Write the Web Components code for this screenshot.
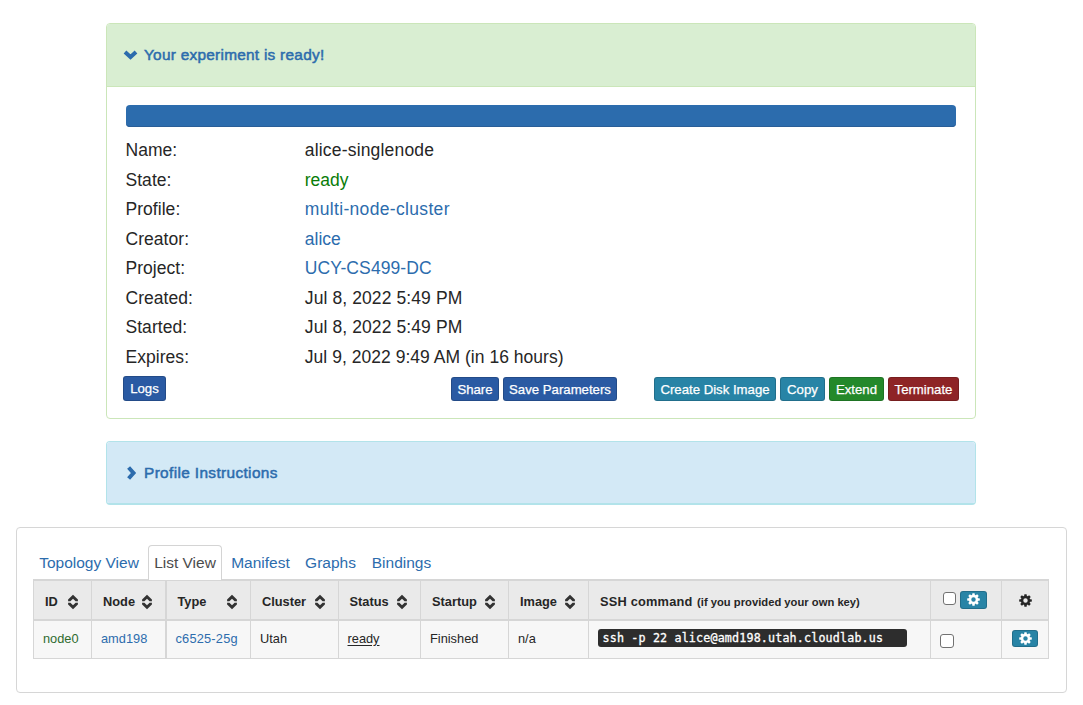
<!DOCTYPE html>
<html lang="en">
<head>
<meta charset="utf-8">
<title>Experiment status</title>
<style>
html,body{margin:0;padding:0;background:#fff}
body{font-family:"Liberation Sans",Arial,Helvetica,sans-serif;color:#262626}
</style>
</head>
<body>
<status-page></status-page>
<script>
const define = (name, html, setup) => {
  const tpl = document.createElement('template');
  tpl.innerHTML = html;
  customElements.define(name, class extends HTMLElement {
    constructor(){ super(); this.attachShadow({mode:'open'}).append(tpl.content.cloneNode(true)); }
    connectedCallback(){ if(setup) setup(this, this.shadowRoot); }
  });
};

/* ---- icons ---- */
const teeth = [0,45,90,135,180,225,270,315].map(a=>`<rect x="5.6" y="0.2" width="2.8" height="3.4" rx=".5" transform="rotate(${a} 7 7)"/>`).join('');
define('gear-icon', `<style>:host{display:block;width:13px;height:13px}svg{display:block}</style>
<svg width="13" height="13" viewBox="0 0 14 14" fill="currentColor">${teeth}<circle cx="7" cy="7" r="3.75" fill="none" stroke="currentColor" stroke-width="2.7"/></svg>`);
define('sort-icon', `<style>:host{display:block;width:12px;height:16px}svg{display:block}</style>
<svg width="12" height="16" viewBox="0 0 12 16" fill="#333"><path d="M6 .8 10.9 5.5V7.2H8.6L6 4.7 3.4 7.2H1.1V5.5Z"/><path d="M6 15.2 10.9 10.5V8.8H8.6L6 11.3 3.4 8.8H1.1V10.5Z"/></svg>`);
define('chevron-icon', `<style>:host{display:flex;width:15px;height:16px;align-items:center;justify-content:center}:host([dir=right]) svg{transform:rotate(-90deg)}svg{display:block}</style>
<svg width="15" height="10" viewBox="0 0 15 10" fill="none" stroke="currentColor" stroke-width="4"><path d="M2 2.1 7.5 7 13 2.1"/></svg>`);

/* ---- controls ---- */
define('action-button', `<style>
:host{display:flex;box-sizing:border-box;height:24px;padding-top:1px;align-items:center;justify-content:center;border-radius:3px;border:1px solid rgba(0,0,0,.16);background-color:var(--c,#2a5aa3);background-clip:border-box;color:#fff;font-size:13.2px;white-space:nowrap;-webkit-text-stroke:.25px #fff}
:host([kind=info]){background-color:#2884a6}:host([kind=ok]){background-color:#24892a}:host([kind=danger]){background-color:#8e2426}
:host([small]){width:27px;height:18px;padding-top:0}
</style><slot></slot>`);
define('check-box', `<style>:host{display:block}input{display:block;appearance:none;box-sizing:border-box;margin:0;width:13px;height:13px;border:1px solid #727272;border-radius:3px;background:#fff}:host([large]) input{width:14px;height:14px}</style><input type="checkbox" aria-label="Select">`);

/* ---- panels ---- */
define('fold-panel', `<style>
:host{display:block;box-sizing:border-box;width:870px;border:1px solid #cbe6b9;border-radius:4px;background:#fff;overflow:hidden}
header{box-sizing:border-box;height:63px;display:flex;align-items:center;padding-left:16px;gap:6px;color:#2c6cad;background:#d9eed2;border-bottom:1px solid #cbe6b9;font-size:15.4px;-webkit-text-stroke:.5px #2c6cad}
.t{letter-spacing:.26px}
:host([kind=info]){border-color:#b2e3ea;border-bottom-width:2px}
:host([kind=info]) header{height:61px;background:#d3e9f6;border:0;padding-left:17px;gap:5px}
:host([kind=info]) .t{letter-spacing:.36px}
</style><header><chevron-icon></chevron-icon><span class="t"><slot name="title"></slot></span></header><slot></slot>`,
(h,r)=>{ if(h.getAttribute('kind')==='info') r.querySelector('chevron-icon').setAttribute('dir','right'); });

define('info-row', `<style>:host{display:grid;grid-template-columns:179.3px 1fr;height:29.5px;align-items:center;font-size:17.5px;white-space:nowrap}
.k{letter-spacing:.04px}
.v{color:var(--v,inherit);letter-spacing:var(--ls,.1px)}</style><span class="k"><slot name="k"></slot></span><span class="v"><slot></slot></span>`);

define('experiment-details', `<style>
:host{display:block;padding:18px 18.5px 0;height:313px}
.bar{height:22px;margin:0 .5px;border-radius:4px;background:#2c6cad;box-shadow:inset 0 -1px 0 #2a5e97;box-sizing:border-box;margin-bottom:8.8px}
.link{--v:#2c6cad}.ready{--v:#087c08}
.actions{display:flex;gap:4px;margin:5.2px -2.5px 0 -2.5px}
</style><div class="bar" role="progressbar"></div>
<info-row style="--ls:.18px"><span slot="k">Name:</span>alice-singlenode</info-row>
<info-row class="ready" style="--ls:0"><span slot="k">State:</span>ready</info-row>
<info-row class="link" style="--ls:.33px"><span slot="k">Profile:</span>multi-node-cluster</info-row>
<info-row class="link" style="--ls:0"><span slot="k">Creator:</span>alice</info-row>
<info-row class="link"><span slot="k">Project:</span>UCY-CS499-DC</info-row>
<info-row><span slot="k">Created:</span>Jul 8, 2022 5:49 PM</info-row>
<info-row><span slot="k">Started:</span>Jul 8, 2022 5:49 PM</info-row>
<info-row style="--ls:.03px"><span slot="k">Expires:</span>Jul 9, 2022 9:49 AM (in 16 hours)</info-row>
<div class="actions">
<action-button style="width:43px;height:25px;padding:0;margin:-1px auto 0 0">Logs</action-button>
<action-button style="width:48px">Share</action-button>
<action-button style="width:114px;margin-right:33px">Save Parameters</action-button>
<action-button kind="info" style="width:122px">Create Disk Image</action-button>
<action-button kind="info" style="width:45px">Copy</action-button>
<action-button kind="ok" style="width:55px">Extend</action-button>
<action-button kind="danger" style="width:71px">Terminate</action-button>
</div>`);

/* ---- tabs and table ---- */
define('view-tab', `<style>:host{display:flex;box-sizing:border-box;height:35px;align-items:center;justify-content:center;font-size:15.5px;color:#2c6cad;white-space:nowrap;border:1px solid transparent;border-bottom:0}
:host([active]){color:#4c4c4c;background:#fff;border-color:#d4d4d4;border-radius:4px 4px 0 0}</style><slot></slot>`);

define('node-table', `<style>
:host{display:block;width:1016px;box-sizing:border-box;font-size:12.8px}
.r{display:grid;grid-template-columns:58px 75px 84px 88px 82px 88px 80px 342px 71px 48px;box-sizing:border-box}
.h{height:42px;background:#eaeaea;border-top:2px solid #d6d6d6;border-bottom:2px solid #d6d6d6;font-weight:bold}
.d{height:38px;background:#f7f7f7;border-bottom:1px solid #d6d6d6}
.r>div{display:flex;align-items:center;box-sizing:border-box;border-left:1px solid #d6d6d6;padding-left:9px;white-space:nowrap;min-width:0}
.r>div:last-child{border-right:1px solid #d6d6d6}
.h>div{padding:2px 0 0 11px}
.r>div:nth-child(3){border-left-width:2px;margin-left:-1px;padding-left:8.5px}
.h>div:nth-child(3){padding-left:10.5px}
.h sort-icon{margin:1px 12px 0 auto}
.h>div:nth-child(2) sort-icon{margin-right:13px}
.d>div{padding-bottom:3px}
.d>div:nth-child(3) a{letter-spacing:.2px}
a{color:#2c6cad}.g{color:#2f6b2f}u{text-underline-offset:2px}
.ssh{letter-spacing:.2px}
small{font-size:11.2px;margin:1px 0 0 4.5px;letter-spacing:.02px}
code{display:block;box-sizing:border-box;width:309px;height:18px;border-radius:3px;background:#2d2d2d;color:#fff;font:11.7px/18px "DejaVu Sans Mono",monospace;letter-spacing:.16px;padding-left:4.5px;-webkit-text-stroke:.3px #fff}
</style>
<div class="r h">
<div>ID<sort-icon></sort-icon></div><div>Node<sort-icon></sort-icon></div><div>Type<sort-icon></sort-icon></div><div>Cluster<sort-icon></sort-icon></div><div style="padding-left:10.5px">Status<sort-icon></sort-icon></div><div>Startup<sort-icon></sort-icon></div><div>Image<sort-icon></sort-icon></div>
<div><span class="ssh">SSH command</span><small>(if you provided your own key)</small></div>
<div style="padding:0 0 1px 12px;gap:4px"><check-box style="margin-top:-3px"></check-box><action-button kind="info" small><gear-icon></gear-icon></action-button></div>
<div style="padding:0 0 0 16.5px"><gear-icon></gear-icon></div>
</div>
<div class="r d">
<div class="g">node0</div><div><a>amd198</a></div><div><a>c6525-25g</a></div><div>Utah</div><div style="padding-left:8.5px"><u>ready</u></div><div>Finished</div><div>n/a</div>
<div style="padding-bottom:3px"><code>ssh -p 22 alice@amd198.utah.cloudlab.us</code></div>
<div style="padding:3px 0 0 9px"><check-box large></check-box></div>
<div style="padding:0 0 2px 10px"><action-button kind="info" small style="width:26px;height:17px"><gear-icon></gear-icon></action-button></div>
</div>`);

define('node-views', `<style>
:host{display:block;box-sizing:border-box;width:1051px;height:166px;border:1px solid #d6d6d6;border-radius:4px;padding:17px 16px 0;background:#fff}
nav{display:flex;height:34px}nav view-tab[active]{z-index:1}
</style><nav><view-tab style="width:113px;margin-right:2px;padding-right:1px">Topology View</view-tab><view-tab active style="width:74px">List View</view-tab><view-tab style="width:77px">Manifest</view-tab><view-tab style="width:63px">Graphs</view-tab><view-tab style="width:79px">Bindings</view-tab></nav><node-table></node-table>`);

define('status-page', `<style>
:host{display:block;box-sizing:border-box;height:705px;padding:23px 16px 0;overflow:hidden}
fold-panel{margin-left:90px}fold-panel[kind=info]{margin-top:22px;margin-bottom:22px}
fold-panel:first-of-type{height:396px}
</style>
<fold-panel><span slot="title">Your experiment is ready!</span><experiment-details></experiment-details></fold-panel>
<fold-panel kind="info"><span slot="title">Profile Instructions</span></fold-panel>
<node-views></node-views>`);
</script>
</body>
</html>
